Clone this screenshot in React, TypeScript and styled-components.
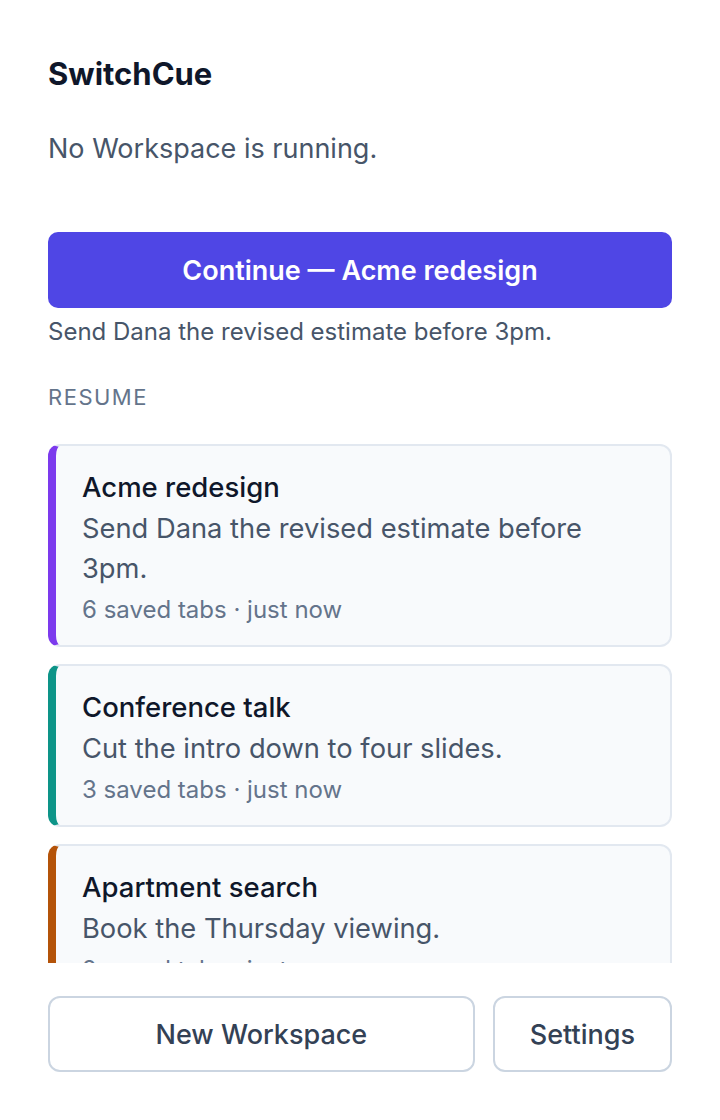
import React from "react";
import styled, { createGlobalStyle } from "styled-components";

const Global = createGlobalStyle`
  html, body { margin: 0; padding: 0; background: #ffffff; }
  body { font-family: Inter, "Noto Sans", "DejaVu Sans", sans-serif; -webkit-font-smoothing: antialiased; }
  * { box-sizing: border-box; }
`;

const Page = styled.div`
  height: 1120px;
  display: flex;
  flex-direction: column;
  padding: 56px 48px 48px;
  overflow: hidden;
`;

const Title = styled.h1`
  margin: 0;
  font-size: 31px;
  line-height: 36px;
  font-weight: 700;
  color: #0f172a;
`;

const Status = styled.p`
  margin: 39px 0 0;
  font-size: 27px;
  line-height: 36px;
  color: #475569;
`;

const PrimaryButton = styled.button`
  margin-top: 65px;
  height: 76px;
  width: 100%;
  border: none;
  border-radius: 10px;
  background: #4f46e5;
  color: #ffffff;
  font-family: inherit;
  font-size: 27px;
  font-weight: 600;
  cursor: pointer;
`;

const Hint = styled.p`
  margin: 9px 0 0;
  font-size: 24px;
  line-height: 30px;
  color: #475569;
`;

const SectionLabel = styled.h2`
  margin: 35px 0 0;
  font-size: 22px;
  line-height: 30px;
  font-weight: 400;
  letter-spacing: 1.5px;
  text-transform: uppercase;
  color: #64748b;
`;

const List = styled.div`
  margin-top: 32px;
  flex: 1;
  min-height: 0;
  overflow-y: auto;
  scrollbar-width: none;
  display: flex;
  flex-direction: column;
  gap: 17px;
  &::-webkit-scrollbar { display: none; }
`;

const Card = styled.div<{ $accent: string }>`
  flex-shrink: 0;
  background: #f8fafc;
  border: 2px solid #e2e8f0;
  border-left: 8px solid ${(p) => p.$accent};
  border-radius: 12px;
  padding: 23px 24px 18px 26px;
  cursor: pointer;
`;

const CardTitle = styled.div`
  font-size: 27.5px;
  line-height: 36px;
  font-weight: 500;
  color: #0f172a;
`;

const CardNote = styled.div`
  margin-top: 4px;
  font-size: 27.3px;
  line-height: 40px;
  color: #475569;
`;

const CardMeta = styled.div`
  margin-top: 4px;
  font-size: 24px;
  line-height: 34px;
  color: #64748b;
`;

const Footer = styled.div`
  margin-top: 33px;
  display: flex;
  gap: 18px;
`;

const SecondaryButton = styled.button<{ $grow?: boolean }>`
  flex: ${(p) => (p.$grow ? "1" : "0 0 auto")};
  height: 76px;
  padding: 0 35px;
  background: #ffffff;
  border: 2px solid #cbd5e1;
  border-radius: 12px;
  color: #334155;
  font-family: inherit;
  font-size: 27px;
  font-weight: 500;
  cursor: pointer;
`;

const workspaces = [
  { name: "Acme redesign", note: "Send Dana the revised estimate before 3pm.", meta: "6 saved tabs · just now", accent: "#7c3aed" },
  { name: "Conference talk", note: "Cut the intro down to four slides.", meta: "3 saved tabs · just now", accent: "#0d9488" },
  { name: "Apartment search", note: "Book the Thursday viewing.", meta: "2 saved tabs · just now", accent: "#b45309" },
];

export default function App() {
  return (
    <>
      <Global />
      <Page>
        <Title>SwitchCue</Title>
        <Status>No Workspace is running.</Status>
        <PrimaryButton>Continue — Acme redesign</PrimaryButton>
        <Hint>Send Dana the revised estimate before 3pm.</Hint>
        <SectionLabel>Resume</SectionLabel>
        <List>
          {workspaces.map((w) => (
            <Card key={w.name} $accent={w.accent}>
              <CardTitle>{w.name}</CardTitle>
              <CardNote>{w.note}</CardNote>
              <CardMeta>{w.meta}</CardMeta>
            </Card>
          ))}
        </List>
        <Footer>
          <SecondaryButton $grow>New Workspace</SecondaryButton>
          <SecondaryButton>Settings</SecondaryButton>
        </Footer>
      </Page>
    </>
  );
}
